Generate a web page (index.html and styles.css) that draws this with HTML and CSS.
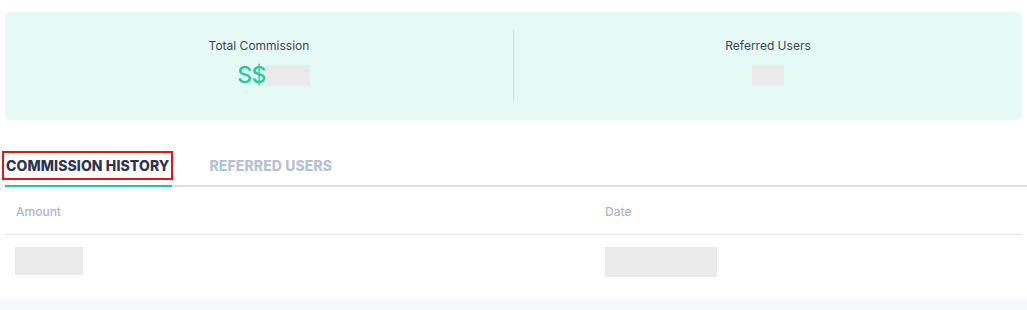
FILE: index.html
```html
<!DOCTYPE html>
<html lang="en">
<head>
  <meta charset="UTF-8" />
  <meta name="viewport" content="width=device-width, initial-scale=1.0"/>
  <title>Referral</title>
  <link rel="stylesheet" href="styles.css">
</head>
<body>
  <div class="page">
    <div class="summary">
      <div class="stat">
        <div class="stat-label">Total Commission</div>
        <div class="stat-value shifted"><span class="currency">S$</span><span class="skeleton sk-total"></span></div>
      </div>
      <div class="stat">
        <div class="stat-label">Referred Users</div>
        <div class="stat-value"><span class="skeleton sk-users"></span></div>
      </div>
    </div>

    <div class="tabs">
      <div class="tab active"><span class="tab-text">COMMISSION HISTORY</span></div>
      <div class="tab"><span class="tab-text">REFERRED USERS</span></div>
    </div>

    <div class="table">
      <div class="row head">
        <div class="cell">Amount</div>
        <div class="cell">Date</div>
      </div>
      <div class="row">
        <div class="cell"><span class="skeleton sk-amount"></span></div>
        <div class="cell"><span class="skeleton sk-date"></span></div>
      </div>
    </div>
  </div>
  <div class="footer"></div>
</body>
</html>
```

FILE: styles.css
```css
body { margin: 0; font-family: Inter, "Noto Sans", sans-serif; background: white; color: #3a3f4b; }
.page { padding: 12px 5px 0 5px; }
.summary { display: flex; background: #e6faf5; border-radius: 5px; padding: 18px 0; width: 1017px; }
.stat { flex: 1; text-align: center; height: 72px; }
.stat + .stat { border-left: 1px solid #bfe8e0; }
.stat-label { font-size: 12px; padding-top: 8px; color: #40454f; }
.stat-value { display: flex; justify-content: center; align-items: center; margin-top: 11px; height: 22px; }
.stat-value.shifted { padding-left: 29px; }
.currency { color: #1fcb9b; font-size: 23px; font-weight: 500; letter-spacing: -0.5px; }
.skeleton { display: inline-block; background: #eaeaea; }
.sk-total { width: 44px; height: 21px; }
.sk-users { width: 32px; height: 21px; }

.tabs { display: flex; gap: 36px; margin-top: 32px; margin-right: -5px; border-bottom: 2px solid #dfe0e5; }
.tab { font-size: 14px; font-weight: 800; letter-spacing: 0.1px; color: #b6c1d6; padding-bottom: 6px; margin-bottom: -2px; border-bottom: 2px solid transparent; }
.tab.active { color: #2c3451; border-bottom-color: #1dc5a0; }
.tab-text { display: inline-block; padding: 5px 3px 5px 1px; }
.tab.active .tab-text { outline: 2px solid #e5141b; outline-offset: -1px; margin-left: -2px; padding-left: 3px; }

.table { width: 1017px; }
.row { display: grid; grid-template-columns: 590px 1fr; }
.row.head { border-bottom: 1px solid #e5e5e5; font-size: 12px; color: #a8b6cf; font-weight: 500; }
.row.head .cell { padding: 17px 10px 15px 11px; }
.row.head .cell + .cell { padding-left: 10px; }
.row .cell { padding: 12px 10px; }
.sk-amount { width: 68px; height: 28px; display: block; }
.sk-date { width: 112px; height: 30px; display: block; }
.footer { background: #f5f9fc; height: 20px; margin-top: 9px; }
```
